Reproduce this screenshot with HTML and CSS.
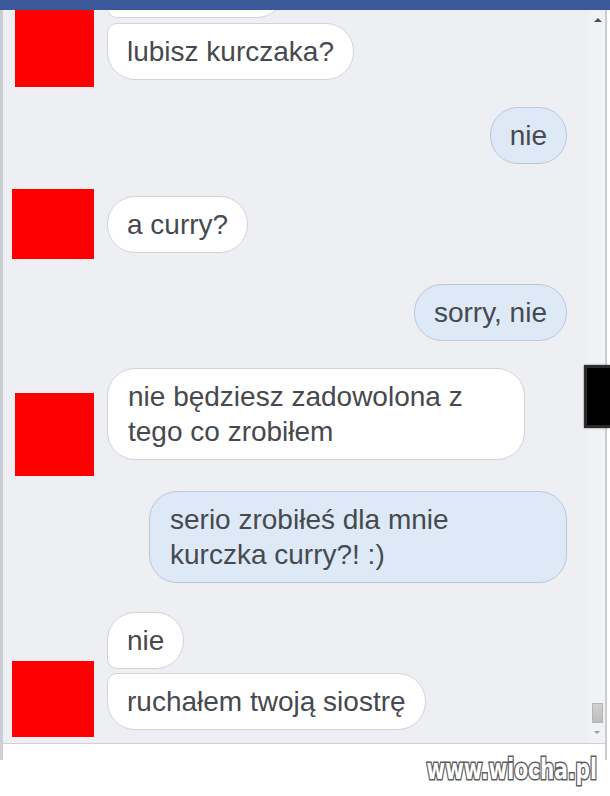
FILE: index.html
```html
<!DOCTYPE html>
<html lang="pl">
<head>
<meta charset="utf-8">
<title>Czat</title>
<link rel="stylesheet" href="styles.css">
</head>
<body>
<div class="window">
  <div class="topbar"></div>
  <div class="chat">
    <div class="messages">
      <div class="row row-in row-g1">
        <div class="avatar av1"></div>
        <div class="stack">
          <div class="bubble in first clipped">&nbsp;</div>
          <div class="bubble in last">lubisz kurczaka?</div>
        </div>
      </div>
      <div class="row row-out row-o1">
        <div class="bubble out">nie</div>
      </div>
      <div class="row row-in row-g2">
        <div class="avatar av2"></div>
        <div class="stack">
          <div class="bubble in">a curry?</div>
        </div>
      </div>
      <div class="row row-out row-o2">
        <div class="bubble out">sorry, nie</div>
      </div>
      <div class="row row-in row-g3">
        <div class="avatar av3"></div>
        <div class="stack">
          <div class="bubble in wide">nie będziesz zadowolona z tego co zrobiłem</div>
        </div>
      </div>
      <div class="row row-out row-o3">
        <div class="bubble out wide">serio zrobiłeś dla mnie kurczka curry?! :)</div>
      </div>
      <div class="row row-in row-g4">
        <div class="avatar av4"></div>
        <div class="stack">
          <div class="bubble in first">nie</div>
          <div class="bubble in last tight">ruchałem twoją siostrę</div>
        </div>
      </div>
    </div>
    <div class="scrollbar">
      <div class="arrow-up"></div>
      <div class="thumb"></div>
      <div class="arrow-down"></div>
    </div>
  </div>
  <div class="input"></div>
  <div class="black-box"></div>
  <div class="watermark">www.wiocha.pl</div>
</div>
</body>
</html>
```

FILE: styles.css
```css
* { box-sizing: border-box; }

html, body {
  margin: 0;
  padding: 0;
  background: #ffffff;
}

.window {
  position: relative;
  width: 610px;
  height: 796px;
  background: #ffffff;
}

.topbar {
  height: 10px;
  background: #3b5998;
}

.chat {
  display: flex;
  width: 607px;
  height: 733px;
  background: #edeff2;
  border-left: 3px solid #c9cdd4;
  border-right: 2px solid #c9ccd2;
}

.messages {
  flex: 1;
  overflow: hidden;
  padding-right: 21px;
}

.row {
  display: flex;
}

.row-in {
  align-items: flex-end;
}

.row-out {
  justify-content: flex-end;
}

.row-g1 { margin-top: -49px; }
.row-o1 { margin-top: 27px; }
.row-g2 { margin-top: 25px; }
.row-o2 { margin-top: 31px; }
.row-g3 { margin-top: 27px; }
.row-o3 { margin-top: 31px; }
.row-g4 { margin-top: 29px; }

.avatar {
  flex: none;
  background: #ff0000;
}

.av1 { width: 79px; height: 80px; margin-left: 12px; margin-right: 13px; margin-bottom: -7px; }
.av2 { width: 82px; height: 70px; margin-left: 9px; margin-right: 13px; margin-bottom: -6px; }
.av3 { width: 79px; height: 83px; margin-left: 12px; margin-right: 13px; margin-bottom: -16px; }
.av4 { width: 82px; height: 76px; margin-left: 9px; margin-right: 13px; margin-bottom: -7px; }

.stack {
  display: flex;
  flex-direction: column;
  align-items: flex-start;
  gap: 5px;
}

.bubble {
  font-family: "Liberation Sans", Arial, sans-serif;
  font-size: 28px;
  line-height: 35px;
  color: #46494e;
  padding: 10px 19px 10px 19px;
  border-radius: 28px;
  max-width: 418px;
}

.bubble.in {
  background: #ffffff;
  border: 1px solid #d0d3d8;
}

.bubble.out {
  background: #dee9f8;
  border: 1px solid #bcc7d6;
}

.bubble.wide {
  width: 418px;
  padding-left: 20px;
}

.bubble.first {
  border-bottom-left-radius: 10px;
}

.bubble.last {
  border-top-left-radius: 10px;
}

.bubble.tight {
  margin-top: -1px;
}

.bubble.clipped {
  width: 178px;
}

.scrollbar {
  position: relative;
  flex: none;
  width: 17px;
  background: #f1f2f4;
}

.arrow-up {
  position: absolute;
  left: 6px;
  top: 8px;
  width: 0;
  height: 0;
  border-left: 4px solid transparent;
  border-right: 4px solid transparent;
  border-bottom: 4px solid #4f4f4f;
}

.thumb {
  position: absolute;
  left: 4px;
  top: 693px;
  width: 11px;
  height: 20px;
  background: linear-gradient(#d2d2d2, #bdbdbd);
  border: 1px solid #b5b5b5;
}

.arrow-down {
  position: absolute;
  left: 6px;
  top: 721px;
  width: 0;
  height: 0;
  border-left: 3px solid transparent;
  border-right: 3px solid transparent;
  border-top: 3px solid #9a9a9a;
}

.input {
  width: 607px;
  height: 17px;
  background: #ffffff;
  border-top: 1px solid #cdd0d5;
  border-left: 3px solid #cfd2d8;
  border-right: 2px solid #c9ccd2;
}

.black-box {
  position: absolute;
  left: 584px;
  top: 365px;
  width: 26px;
  height: 63px;
  background: #000000;
  border: 3px solid #2b2b2b;
  border-right: none;
  box-shadow: 0 0 2px #777;
}

.watermark {
  position: absolute;
  right: 13px;
  top: 753px;
  font-family: "DejaVu Sans Condensed", "DejaVu Sans", sans-serif;
  font-weight: bold;
  font-size: 28px;
  letter-spacing: 0;
  color: #ffffff;
  -webkit-text-stroke: 3px #5e5e5e;
  paint-order: stroke fill;
  transform: scaleX(0.8);
  transform-origin: right center;
}
```
